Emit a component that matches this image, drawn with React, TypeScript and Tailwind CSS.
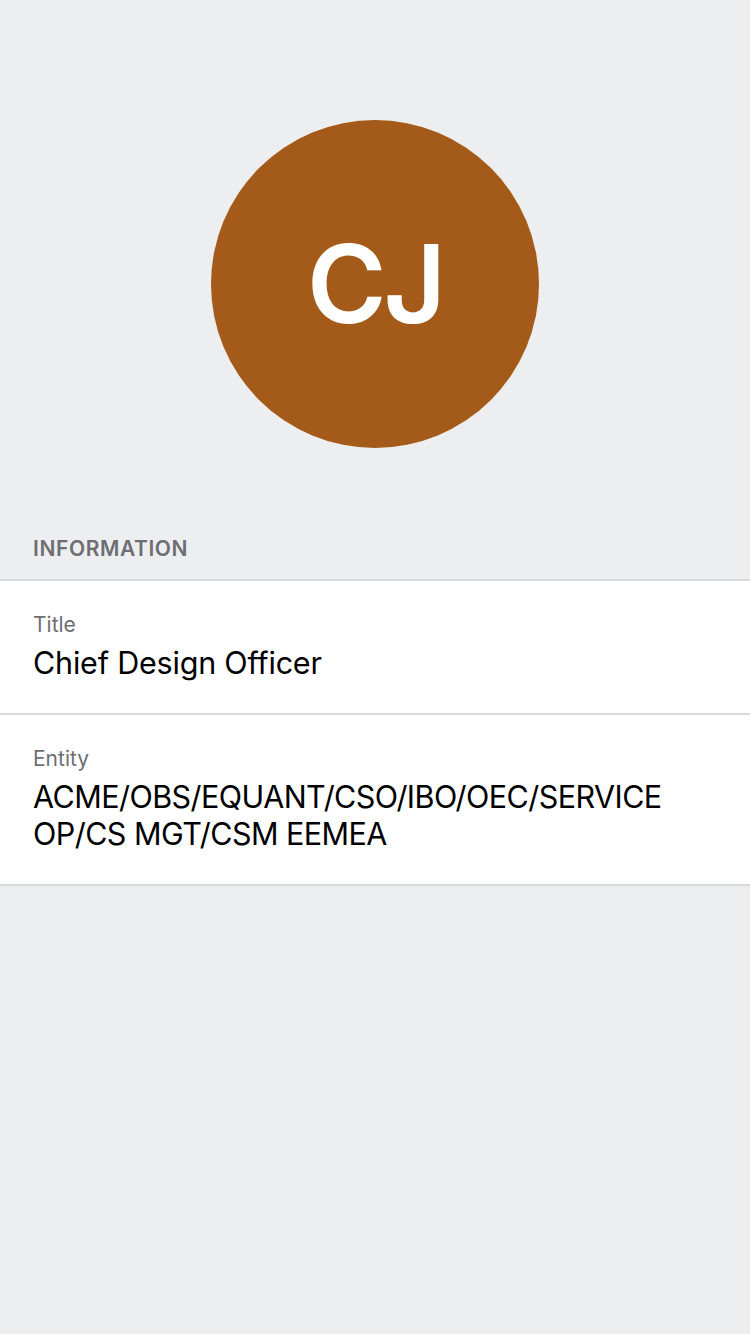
const FIELDS = [
  { label: 'Title', value: 'Chief Design Officer', tight: false },
  { label: 'Entity', value: 'ACME/OBS/EQUANT/CSO/IBO/OEC/SERVICE OP/CS MGT/CSM EEMEA', tight: true },
];

export default function App() {
  return (
    <div className="min-h-[1334px] w-[750px] bg-[#edeef0] font-['Inter',sans-serif]">
      <div className="flex justify-center pt-[120px]">
        <div className="flex h-[328px] w-[328px] items-center justify-center rounded-full bg-[#a45a18]">
          <span className="text-[108px] font-semibold leading-none tracking-[-3px] text-white">CJ</span>
        </div>
      </div>

      <div className="px-[33px] pt-[89px] pb-[18px] text-[21px] font-semibold leading-[24px] tracking-[0.6px] text-[#6d6e73]">
        INFORMATION
      </div>

      <div className="border-t-2 border-[#d9dadd] bg-white">
        {FIELDS.map(f => (
          <div key={f.label} className="border-b-2 border-[#d9dadd] px-[33px] pt-[31px] pb-[32px]">
            <div className="text-[21px] leading-[26px] text-[#6d6e73]">{f.label}</div>
            <div
              className={
                f.tight
                  ? 'mt-[6px] text-[30.5px] leading-[37px] tracking-[-0.55px] text-black'
                  : 'mt-[6px] text-[30.5px] leading-[37px] tracking-[-0.2px] text-black'
              }
            >
              {f.value}
            </div>
          </div>
        ))}
      </div>
    </div>
  );
}
